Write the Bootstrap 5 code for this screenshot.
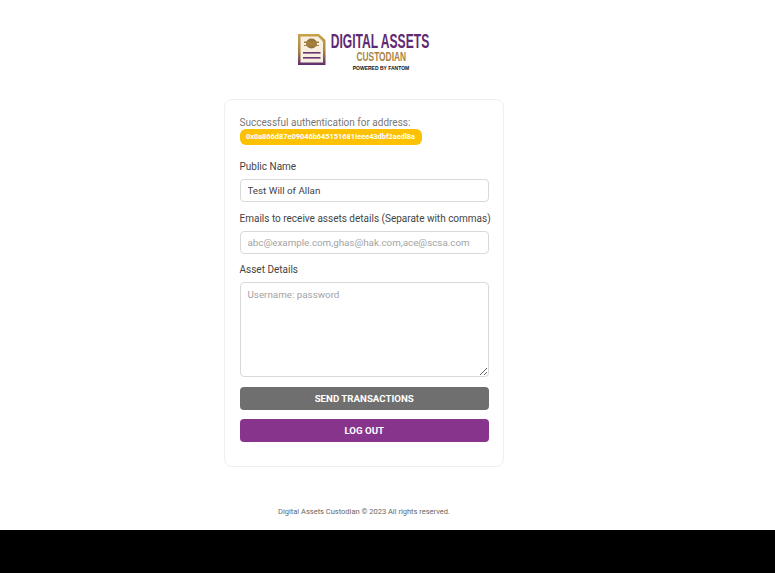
<!DOCTYPE html>
<html lang="en">
<head>
<meta charset="utf-8">
<title>Digital Assets Custodian</title>
<link href="https://cdn.jsdelivr.net/npm/bootstrap@5.3.0/dist/css/bootstrap.min.css" rel="stylesheet">
<style>
html{background:#000;height:100%}
body{background:transparent;font-family:Roboto,"Liberation Sans",sans-serif;color:#444;min-height:100%}
.pagewrap{background:#fff;height:530px;overflow:hidden}
.innerwrap{width:728px}
.logo-slot{height:99px;padding:32px 0 0 2px}
.logo-svg{display:block;width:134px;height:40px;overflow:visible}
.panel{width:280px;height:368px;border:1px solid #efefef;border-radius:8px;padding:16px 14px 0 14.5px}
.auth-text{font-size:10px;line-height:13px;color:#777}
.addr-pill{display:block;width:182px;text-align:center;background:#fdc104;color:#fff;font-size:7.4px;font-weight:700;border-radius:6px;line-height:16px;height:16px;white-space:nowrap}
.lbl{display:block;font-size:10px;line-height:13px;color:#444;margin:0 0 6px;white-space:nowrap}
.fld{display:block;width:100%;height:23px;border:1px solid #d9d9d9;border-radius:4px;font-size:9.8px;padding:0 7px;color:#444;background:#fff;font-family:inherit;box-shadow:none;min-height:0}
.fld::placeholder{color:#a3a3a3;opacity:1}
textarea.fld{height:95px;padding:5px 7px;line-height:13px;resize:vertical}
.act{display:block;width:100%;height:23px;border:0;border-radius:4px;color:#fff;font-size:9.7px;font-weight:700;line-height:23px;padding:0;text-align:center;font-family:inherit}
.act-gray{background:#6f6f6f}
.act-gray:hover{background:#666;color:#fff}
.act-purple{background:#87358c}
.act-purple:hover{background:#7a2f7f;color:#fff}
.sec-a{margin-top:15px}
.sec-b{margin-top:10px}
.sec-c{margin-top:9px}
.btn-a{margin-top:10px}
.btn-b{margin-top:9px}
.foot{font-size:7.5px;color:#666;text-align:center;margin-top:40px;line-height:10px}
.brand-a{font-family:"Liberation Sans",sans-serif;font-weight:700}
</style>
</head>
<body>
<div class="pagewrap">
 <div class="innerwrap">
  <div class="logo-slot d-flex justify-content-center">
    <svg class="logo-svg" viewBox="0 0 134 40" role="img" aria-label="Digital Assets Custodian logo">
      <defs>
        <linearGradient id="lg" x1="0" y1="0" x2="0" y2="1">
          <stop offset="0" stop-color="#c9a24b"/>
          <stop offset=".55" stop-color="#a98346"/>
          <stop offset="1" stop-color="#5f2a73"/>
        </linearGradient>
      </defs>
      <path d="M0 2h21l6.500 6v25h-27.500z" fill="url(#lg)"/>
      <path d="M2.500 4.500h17.500l5 5v21h-22.500z" fill="#f7f0e0"/>
      <ellipse cx="13.500" cy="11.500" rx="5.500" ry="5" fill="#96743a"/>
      <path d="M6 9.500h15v1.500h-2v2h2v1h-15v-1h2v-2h-2z" fill="#a4803f"/>
      <rect x="5" y="20" width="17.500" height="1.600" fill="#6a3470"/>
      <rect x="5" y="25" width="17.500" height="1.600" fill="#6a3470"/>
      <text class="brand-a" transform="translate(32.700 16.300) scale(.62 1)" font-size="19.500" fill="#5f2a73">DIGITAL ASSETS</text>
      <text class="brand-a" transform="translate(58.500 29) scale(.67 1)" font-size="12.500" fill="#a98346">CUSTODIAN</text>
      <text class="brand-a" transform="translate(54.700 38)" font-size="5" fill="#111">POWERED BY FANTOM</text>
    </svg>
  </div>
  <div class="panel mx-auto">
    <div class="auth-text">Successful authentication for address:</div>
    <span class="addr-pill">0x0a866d87e09046b645151681Ieee43dbf2aedl8a</span>
    <div class="sec-a">
      <label class="lbl" for="pn">Public Name</label>
      <input id="pn" class="form-control fld" type="text" value="Test Will of Allan">
    </div>
    <div class="sec-b">
      <label class="lbl" for="em">Emails to receive assets details (Separate with commas)</label>
      <input id="em" class="form-control fld" type="text" placeholder="abc@example.com,ghas@hak.com,ace@scsa.com">
    </div>
    <div class="sec-c">
      <label class="lbl" for="ad">Asset Details</label>
      <textarea id="ad" class="form-control fld" placeholder="Username: password"></textarea>
    </div>
    <button type="button" class="btn act act-gray btn-a">SEND TRANSACTIONS</button>
    <button type="button" class="btn act act-purple btn-b">LOG OUT</button>
  </div>
  <div class="foot">Digital Assets Custodian © 2023 All rights reserved.</div>
 </div>
</div>
<script src="https://cdn.jsdelivr.net/npm/bootstrap@5.3.0/dist/js/bootstrap.bundle.min.js"></script>
</body>
</html>
